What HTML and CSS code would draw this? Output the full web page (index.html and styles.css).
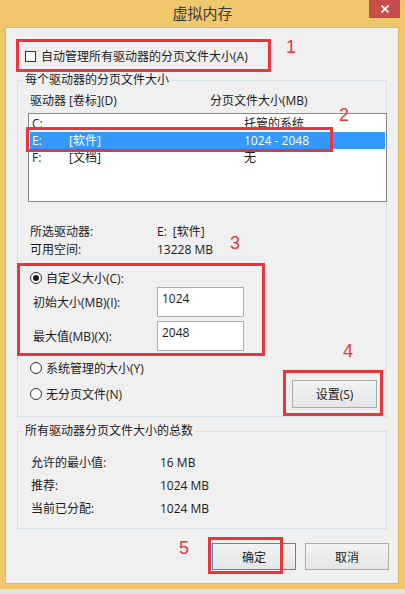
FILE: index.html
```html
<!DOCTYPE html>
<html lang="zh-CN">
<head>
    <meta charset="UTF-8">
    <meta name="viewport" content="width=device-width, initial-scale=1.0">
    <title>虚拟内存</title>
    <link rel="stylesheet" href="styles.css">
</head>
<body>
    <div class="window">
        <div class="titlebar">
            <span class="title">虚拟内存</span>
            <span class="close">
                <svg width="8" height="8" viewBox="0 0 8 8"><path d="M0.5 0.5 L7.5 7.5 M7.5 0.5 L0.5 7.5" stroke="#fff" stroke-width="1.6" fill="none"/></svg>
            </span>
        </div>

        <div class="client">
            <label class="check-row"><span class="checkbox"></span>自动管理所有驱动器的分页文件大小(A)</label>

            <div class="group">
                <div class="group-title">每个驱动器的分页文件大小</div>
                <div class="list-head"><span>驱动器 [卷标](D)</span><span>分页文件大小(MB)</span></div>
                <div class="drive-list">
                    <div class="drive"><span>C:</span><span></span><span>托管的系统</span></div>
                    <div class="drive selected"><span>E:</span><span>[软件]</span><span>1024 - 2048</span></div>
                    <div class="drive"><span>F:</span><span>[文档]</span><span>无</span></div>
                </div>

                <div class="info-row first"><span>所选驱动器:</span><span>E:<span class="vol">[软件]</span></span></div>
                <div class="info-row"><span>可用空间:</span><span>13228 MB</span></div>

                <label class="radio-row custom"><span class="radio on"></span>自定义大小(C):</label>
                <div class="size-row"><span class="size-label">初始大小(MB)(I):</span><span class="edit">1024</span></div>
                <div class="size-row"><span class="size-label">最大值(MB)(X):</span><span class="edit">2048</span></div>

                <div class="bottom-row">
                    <div class="radios">
                        <label class="radio-row"><span class="radio"></span>系统管理的大小(Y)</label>
                        <label class="radio-row"><span class="radio"></span>无分页文件(N)</label>
                    </div>
                    <button class="btn set-btn">设置(S)</button>
                </div>
            </div>

            <div class="group totals">
                <div class="group-title">所有驱动器分页文件大小的总数</div>
                <div class="total-row first"><span>允许的最小值:</span><span>16 MB</span></div>
                <div class="total-row"><span>推荐:</span><span>1024 MB</span></div>
                <div class="total-row"><span>当前已分配:</span><span>1024 MB</span></div>
            </div>

            <div class="actions">
                <button class="btn default">确定</button>
                <button class="btn">取消</button>
            </div>

            <!-- annotations drawn over the dialog -->
            <div class="mark m1"></div>
            <div class="mark m2"></div>
            <div class="mark m3"></div>
            <div class="mark m4"></div>
            <div class="mark m5"></div>
            <span class="num n1">1</span>
            <span class="num n2">2</span>
            <span class="num n3">3</span>
            <span class="num n4">4</span>
            <span class="num n5">5</span>
        </div>
    </div>
</body>
</html>
```

FILE: styles.css
```css
* {
    box-sizing: border-box;
}
body {
    margin: 0;
    background: #e2e2e2;
    font-family: "Open Sans", "Noto Sans CJK SC", sans-serif;
    font-size: 12px;
    color: #1b1b1b;
}
.window {
    position: relative;
    width: 405px;
    height: 589px;
    background: #f0c86b;
    padding: 0 6px 5px 5px;
}
.titlebar {
    height: 27px;
    line-height: 27px;
    text-align: center;
    margin-left: -5px;
    margin-right: -6px;
}
.title {
    font-size: 15px;
    color: #3a3a3a;
}
.close {
    position: absolute;
    top: 0;
    right: 5px;
    width: 31px;
    height: 18px;
    background: #c94c4c;
    display: flex;
    align-items: center;
    justify-content: center;
}
.client {
    display: flow-root;
    position: relative;
    height: 557px;
    background: #f0f0f0;
    box-shadow: inset 0 0 0 1px #d9b866;
}

.check-row {
    display: flex;
    align-items: center;
    gap: 5px;
    height: 18px;
    margin-top: 20px;
    padding-left: 20px;
}
.checkbox {
    width: 11px;
    height: 11px;
    border: 1px solid #333;
    background: #fff;
}

.group {
    margin: 15px 12px 0;
    border: 1px solid #d5dfe5;
    padding: 0 0 8px 10px;
}
.group-title {
    width: max-content;
    height: 16px;
    line-height: 16px;
    margin: -9px 0 0 -5px;
    padding: 0 2px;
    background: #f0f0f0;
}
.list-head {
    display: grid;
    grid-template-columns: 180px auto;
    height: 18px;
    line-height: 18px;
    margin-top: 4px;
    padding-left: 2px;
}
.drive-list {
    height: 89px;
    margin: 3px -1px 0 0;
    border: 1px solid #828790;
    background: #fff;
    padding: 1px;
}
.drive {
    display: grid;
    grid-template-columns: 37px 175px auto;
    height: 17px;
    line-height: 17px;
    padding-left: 2px;
}
.drive.selected {
    background: #3399ff;
    color: #fff;
}
.info-row {
    display: grid;
    grid-template-columns: 127px auto;
    height: 18px;
    line-height: 18px;
    padding-left: 2px;
}
.info-row.first {
    margin-top: 21px;
}
.vol {
    margin-left: 6px;
}

.radio-row {
    display: flex;
    align-items: center;
    gap: 4px;
    height: 18px;
    padding-left: 2px;
}
.radio-row.custom {
    margin-top: 10px;
}
.radio {
    width: 12px;
    height: 12px;
    border: 1px solid #333;
    border-radius: 50%;
    background: #fff;
    display: flex;
    align-items: center;
    justify-content: center;
}
.radio.on::after {
    content: "";
    width: 6px;
    height: 6px;
    border-radius: 50%;
    background: #1b1b1b;
}
.size-row {
    display: flex;
    align-items: center;
    height: 30px;
    padding-left: 5px;
}
.size-row + .size-row {
    margin-top: 4px;
}
.size-label {
    width: 124px;
}
.edit {
    align-self: stretch;
    width: 87px;
    border: 1px solid #abadb3;
    background: #fff;
    padding: 2px 0 0 4px;
    line-height: 18px;
}
.bottom-row {
    display: flex;
    justify-content: space-between;
    align-items: flex-start;
    margin-top: 8px;
}
.radios {
    display: flex;
    flex-direction: column;
    gap: 8px;
}

.btn {
    font: inherit;
    color: #1b1b1b;
    background: linear-gradient(#f3f3f3, #e5e5e5);
    border: 1px solid #acacac;
    padding: 0;
    width: 84px;
    height: 27px;
}
.btn.default {
    border-color: #3c8ddc;
}
.set-btn {
    width: 85px;
    height: 28px;
    margin: 21px 9px 0 0;
}

.totals {
    margin-top: 14px;
}
.total-row {
    display: grid;
    grid-template-columns: 129px auto;
    height: 23px;
    line-height: 23px;
    padding-left: 3px;
}
.total-row.first {
    margin-top: 12px;
}
.actions {
    display: flex;
    justify-content: flex-end;
    gap: 9px;
    margin-top: 14px;
    padding-right: 10px;
}

.mark {
    position: absolute;
    border: 3px solid #e8363c;
}
.m1 { left: 11px; top: 12px; width: 255px; height: 33px; }
.m2 { left: 21px; top: 100px; width: 307px; height: 25px; }
.m3 { left: 12px; top: 236px; width: 248px; height: 93px; }
.m4 { left: 278px; top: 343px; width: 100px; height: 46px; }
.m5 { left: 203px; top: 510px; width: 75px; height: 37px; }

.num {
    position: absolute;
    font-family: "Liberation Sans", Arial, sans-serif;
    font-size: 18px;
    line-height: 18px;
    color: #e8363c;
}
.n1 { left: 281px; top: 11px; }
.n2 { left: 334px; top: 79px; }
.n3 { left: 225px; top: 207px; }
.n4 { left: 338px; top: 315px; }
.n5 { left: 174px; top: 512px; }
```
